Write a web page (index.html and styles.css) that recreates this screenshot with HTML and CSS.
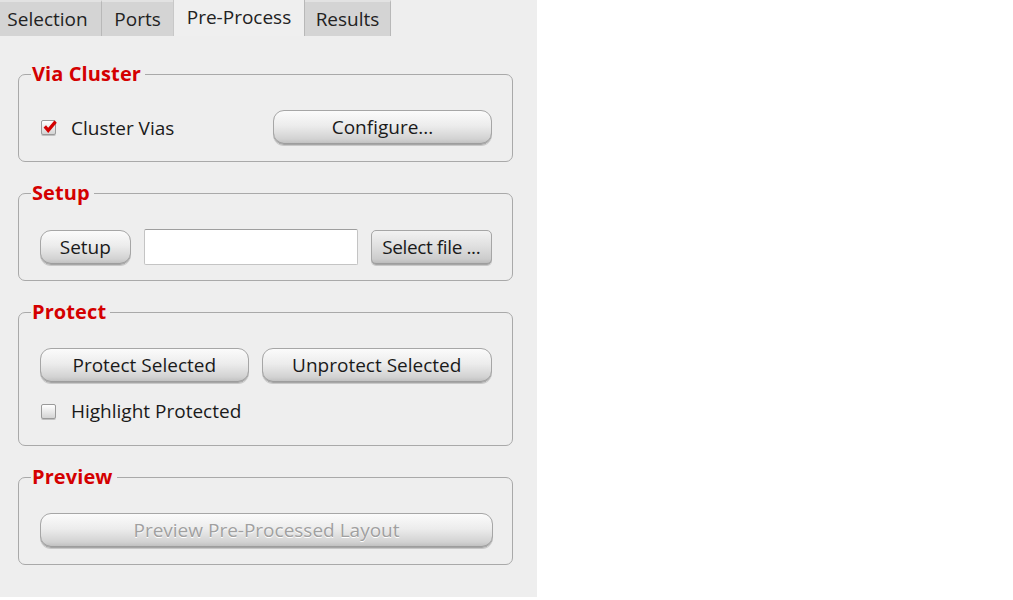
FILE: index.html
```html
<!DOCTYPE html>
<html>
<head>
<meta charset="utf-8">
<link rel="stylesheet" href="styles.css">
</head>
<body>
<div class="panel">
  <div class="tabs">
    <div class="tab t1">Selection</div>
    <div class="tab t2">Ports</div>
    <div class="tab t3 active">Pre-Process</div>
    <div class="tab t4">Results</div>
  </div>
  <div class="content">
    <fieldset class="group g1">
      <legend>Via Cluster</legend>
      <div class="row spread">
        <label class="check">
          <span class="box checked"><svg width="14" height="13" viewBox="0 0 14 13"><path d="M1.8 6.4 L5.2 10.4 L12.6 1.6" fill="none" stroke="#d40000" stroke-width="3.2" stroke-linejoin="miter"/></svg></span>
          <span>Cluster Vias</span>
        </label>
        <button class="btn w-configure">Configure...</button>
      </div>
    </fieldset>

    <fieldset class="group g2">
      <legend>Setup</legend>
      <div class="row">
        <button class="btn w-setup">Setup</button>
        <input class="field" type="text">
        <button class="btn square w-select">Select file ...</button>
      </div>
    </fieldset>

    <fieldset class="group g3">
      <legend>Protect</legend>
      <div class="row">
        <button class="btn w-protect">Protect Selected</button>
        <button class="btn w-unprotect">Unprotect Selected</button>
      </div>
      <label class="check hl">
        <span class="box"></span>
        <span>Highlight Protected</span>
      </label>
    </fieldset>

    <fieldset class="group g4">
      <legend>Preview</legend>
      <button class="btn disabled w-full">Preview Pre-Processed Layout</button>
    </fieldset>
  </div>
</div>
</body>
</html>
```

FILE: styles.css
```css
html, body {
  margin: 0;
  padding: 0;
  background: #ffffff;
}
body {
  font-family: "Open Sans", "DejaVu Sans", sans-serif;
  font-size: 19px;
  color: #1a1a1a;
}
.panel {
  width: 537px;
  height: 597px;
  background: #eeeeee;
  display: flex;
  flex-direction: column;
}
.tabs {
  display: flex;
  height: 36px;
  box-sizing: border-box;
}
.tab {
  box-sizing: border-box;
  height: 36px;
  background: #d4d4d4;
  border-right: 1px solid #b8b8b8;
  border-top: 2px solid #e2e2e2;
  display: flex;
  align-items: center;
  justify-content: center;
  font-size: 19px;
  color: #222;
  padding-bottom: 0;
}
.tab.active {
  background: #efefef;
  border-top: none;
  border-left: 1px solid #c8c8c8;
  margin-left: -1px;
  padding-bottom: 2px;
}
.t1 { width: 102px; padding-right: 6px; }
.t2 { width: 72px; }
.t3 { width: 132px; }
.t4 { width: 86px; }

.content {
  padding: 28px 0 0 18px;
  display: flex;
  flex-direction: column;
  gap: 21px;
}
.group {
  width: 495px;
  box-sizing: border-box;
  margin: 0;
  border: 1px solid #a9a9a9;
  border-radius: 7px;
  padding: 26px 20px 15px 21px;
  min-inline-size: 0;
}
.group legend {
  font-weight: 700;
  font-size: 20px;
  line-height: 20px;
  color: #d40000;
  padding: 0 4px 0 1px;
  margin-left: -9px;
  letter-spacing: 0.1px;
}
.row {
  display: flex;
  align-items: center;
}
.spread {
  justify-content: space-between;
}
.check {
  display: flex;
  align-items: center;
  gap: 15px;
  color: #1a1a1a;
}
.box {
  width: 15px;
  height: 15px;
  box-sizing: border-box;
  border: 1px solid #9a9a9a;
  border-radius: 2px;
  background: linear-gradient(#ffffff, #d4d4d4);
  box-shadow: 0 1px 0 #c0c0c0;
  display: flex;
  align-items: center;
  justify-content: center;
  margin-left: 1px;
}
.box svg {
  margin-left: 2px;
  margin-top: -2px;
  flex: none;
}
.btn {
  font-family: inherit;
  font-size: 19px;
  color: #1a1a1a;
  height: 35px;
  box-sizing: border-box;
  border: 1px solid #a6a6a6;
  border-radius: 11px;
  background: linear-gradient(#fbfbfb 0%, #ececec 45%, #d2d2d2 85%, #bdbdbd 100%);
  box-shadow: inset 0 -1px 0 #9d9d9d, 0 1px 0 #c8c8c8;
  padding: 0 0 1px 0;
  display: flex;
  align-items: center;
  justify-content: center;
  white-space: nowrap;
}
.btn.square {
  border-radius: 5px;
  background: linear-gradient(#f2f2f2 0%, #e0e0e0 45%, #cccccc 85%, #b8b8b8 100%);
  letter-spacing: -0.4px;
}
.btn.disabled {
  color: #a0a0a0;
  text-shadow: 0 1px 0 #ffffff;
}
.w-configure { width: 219px; }
.w-setup { width: 91px; }
.field {
  width: 215px;
  height: 36px;
  box-sizing: border-box;
  margin: 0 13px 0 13px;
  border: 1px solid #c4c4c4;
  border-top-color: #9e9e9e;
  border-radius: 2px;
  background: #ffffff;
  padding: 0;
}
.w-select { width: 122px; }
.w-protect { width: 209px; margin-right: 13px; }
.w-unprotect { width: 231px; }
.g1 { padding-bottom: 16px; }
.g3 { padding-top: 26px; padding-bottom: 22px; }
.g4 { padding-bottom: 16px; }
.hl {
  margin-top: 16px;
  height: 24px;
}
.w-full { width: 453px; }
```
